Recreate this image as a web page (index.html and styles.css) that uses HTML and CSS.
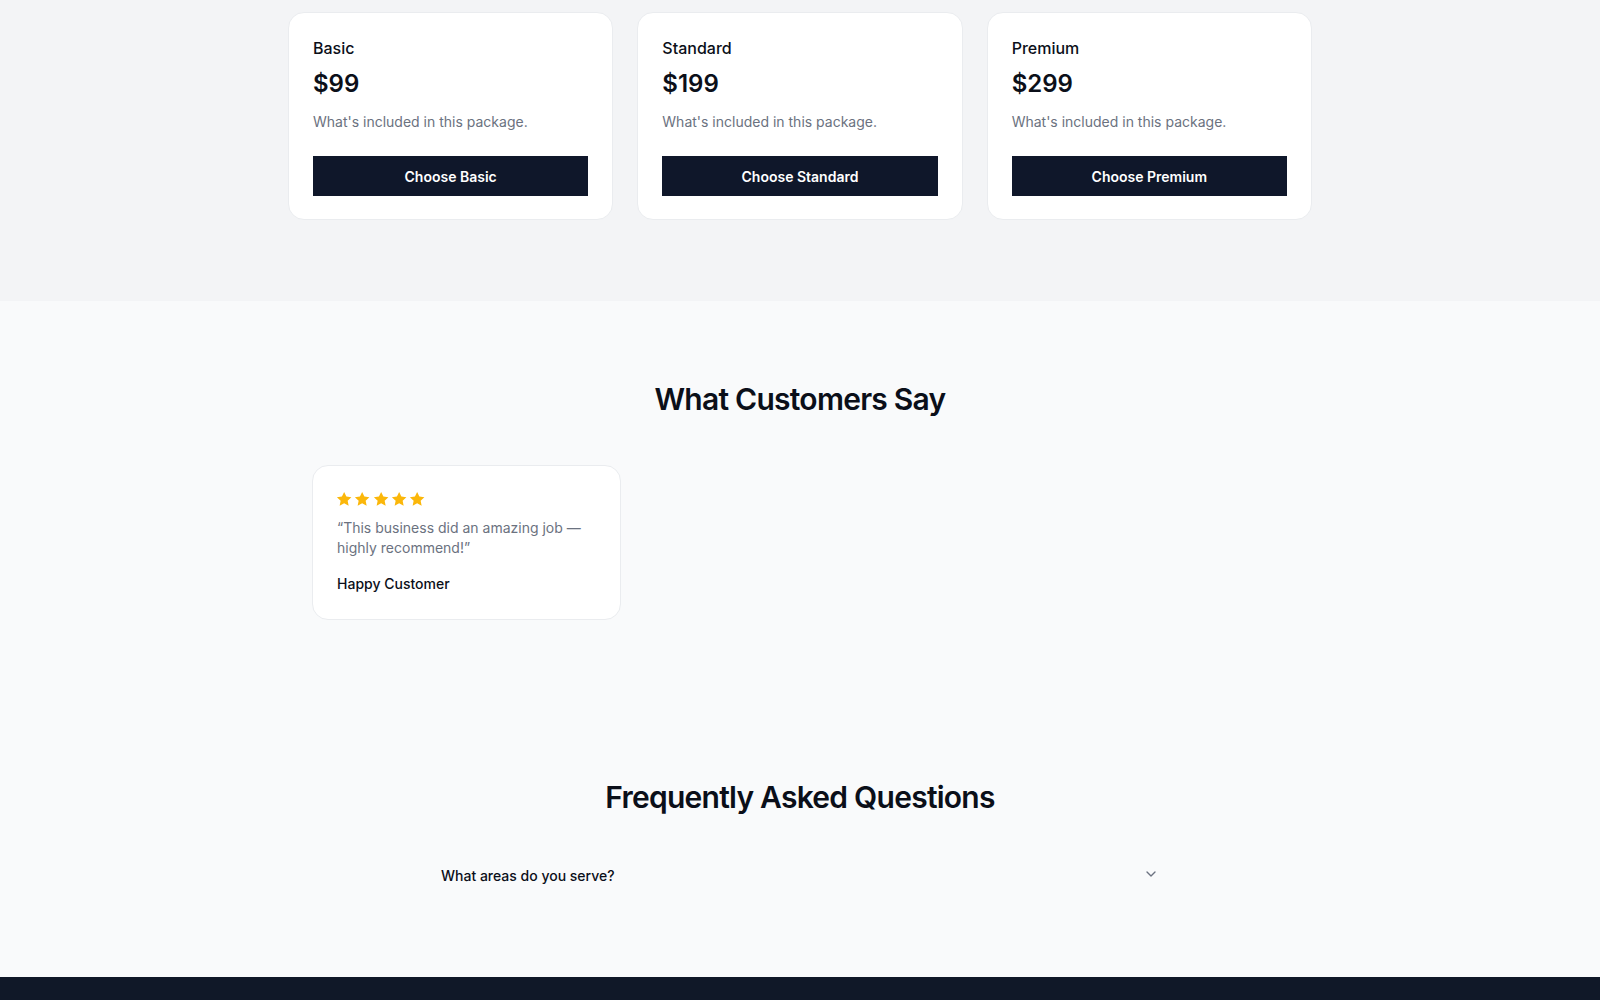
FILE: index.html
```html
<!DOCTYPE html>
<html lang="en">
<head>
<meta charset="utf-8">
<title>Business</title>
<link rel="stylesheet" href="styles.css">
</head>
<body>
<section class="pricing">
  <div class="pricing-grid">
    <div class="plan">
      <h3 class="plan-name">Basic</h3>
      <div class="plan-price">$99</div>
      <p class="plan-desc">What's included in this package.</p>
      <button class="plan-btn">Choose Basic</button>
    </div>
    <div class="plan">
      <h3 class="plan-name">Standard</h3>
      <div class="plan-price">$199</div>
      <p class="plan-desc">What's included in this package.</p>
      <button class="plan-btn">Choose Standard</button>
    </div>
    <div class="plan">
      <h3 class="plan-name">Premium</h3>
      <div class="plan-price">$299</div>
      <p class="plan-desc">What's included in this package.</p>
      <button class="plan-btn">Choose Premium</button>
    </div>
  </div>
</section>

<section class="testimonials">
  <h2 class="section-title">What Customers Say</h2>
  <div class="testi-grid">
    <div class="testi">
      <div class="stars">
        <svg viewBox="0 0 24 24"><path d="M12 2.5l2.9 6.1 6.6.8-4.9 4.6 1.3 6.6L12 17.3l-5.9 3.3 1.3-6.6-4.9-4.6 6.6-.8z"/></svg>
        <svg viewBox="0 0 24 24"><path d="M12 2.5l2.9 6.1 6.6.8-4.9 4.6 1.3 6.6L12 17.3l-5.9 3.3 1.3-6.6-4.9-4.6 6.6-.8z"/></svg>
        <svg viewBox="0 0 24 24"><path d="M12 2.5l2.9 6.1 6.6.8-4.9 4.6 1.3 6.6L12 17.3l-5.9 3.3 1.3-6.6-4.9-4.6 6.6-.8z"/></svg>
        <svg viewBox="0 0 24 24"><path d="M12 2.5l2.9 6.1 6.6.8-4.9 4.6 1.3 6.6L12 17.3l-5.9 3.3 1.3-6.6-4.9-4.6 6.6-.8z"/></svg>
        <svg viewBox="0 0 24 24"><path d="M12 2.5l2.9 6.1 6.6.8-4.9 4.6 1.3 6.6L12 17.3l-5.9 3.3 1.3-6.6-4.9-4.6 6.6-.8z"/></svg>
      </div>
      <p class="testi-quote">“This business did an amazing job — highly recommend!”</p>
      <p class="testi-name">Happy Customer</p>
    </div>
  </div>
</section>

<section class="faq">
  <h2 class="section-title faq-title">Frequently Asked Questions</h2>
  <div class="faq-list">
    <div class="faq-item">
      <span class="faq-q">What areas do you serve?</span>
      <svg class="chev" viewBox="0 0 24 24"><path d="M6 9l6 6 6-6"/></svg>
    </div>
  </div>
</section>

<footer class="footer"></footer>
</body>
</html>
```

FILE: styles.css
```css
* { box-sizing: border-box; }
html, body { margin: 0; padding: 0; }
body {
  font-family: Inter, "Noto Sans", "Liberation Sans", sans-serif;
  background: #f9fafb;
  color: #0b0f19;
}
h2, h3, p { margin: 0; }

.pricing {
  background: #f3f4f6;
  padding: 12px 24px 81px;
}
.pricing-grid {
  max-width: 1024px;
  margin: 0 auto;
  display: grid;
  grid-template-columns: repeat(3, 1fr);
  gap: 24px;
}
.plan {
  background: #fff;
  border: 1px solid #eaecef;
  border-radius: 16px;
  padding: 23px 24px 23px;
  display: flex;
  flex-direction: column;
}
.plan-name {
  font-size: 16px;
  line-height: 24px;
  font-weight: 500;
  color: #0b0f19;
}
.plan-price {
  margin-top: 8px;
  font-size: 24px;
  line-height: 32px;
  font-weight: 600;
  color: #0b0f19;
}
.plan-desc {
  margin-top: 12px;
  font-size: 14px;
  line-height: 20px;
  color: #6b7280;
}
.plan-btn {
  margin-top: 24px;
  height: 40px;
  border: 0;
  border-radius: 0;
  background: #0f172a;
  color: #fff;
  font-family: inherit;
  font-size: 14px;
  font-weight: 600;
}

.section-title {
  text-align: center;
  font-size: 30px;
  line-height: 36px;
  font-weight: 600;
  letter-spacing: -0.75px;
  color: #0b0f19;
}
.testimonials {
  padding: 80px 24px 80px;
}
.testi-grid {
  max-width: 1024px;
  margin: 48px auto 0;
  padding: 0 24px;
  display: grid;
  grid-template-columns: repeat(3, 1fr);
  gap: 24px;
}
.testi {
  background: #fff;
  border: 1px solid #eaecef;
  border-radius: 16px;
  padding: 22px 24px 25px;
}
.stars {
  display: flex;
  height: 22px;
  align-items: center;
  gap: 0;
  margin-left: -2px;
}
.stars svg {
  width: 18.3px;
  height: 18.3px;
  fill: #fbb70a;
}
.testi-quote {
  margin-top: 8px;
  font-size: 14px;
  line-height: 20px;
  color: #6b7280;
}
.testi-name {
  margin-top: 16px;
  font-size: 14px;
  line-height: 20px;
  font-weight: 500;
  color: #0b0f19;
}

.faq {
  padding: 79px 24px 76px;
}
.faq-list {
  max-width: 768px;
  margin: 32px auto 0;
}
.faq-item {
  display: flex;
  align-items: center;
  justify-content: space-between;
  padding: 19px 25px 15px 25px;
}
.faq-q {
  font-size: 14px;
  line-height: 20px;
  font-weight: 500;
  color: #0b0f19;
}
.chev {
  width: 16px;
  height: 16px;
  fill: none;
  stroke: #6b7280;
  stroke-width: 2;
  stroke-linecap: round;
  stroke-linejoin: round;
  margin-top: -4px;
}

.footer {
  background: #101828;
  height: 200px;
}
```
